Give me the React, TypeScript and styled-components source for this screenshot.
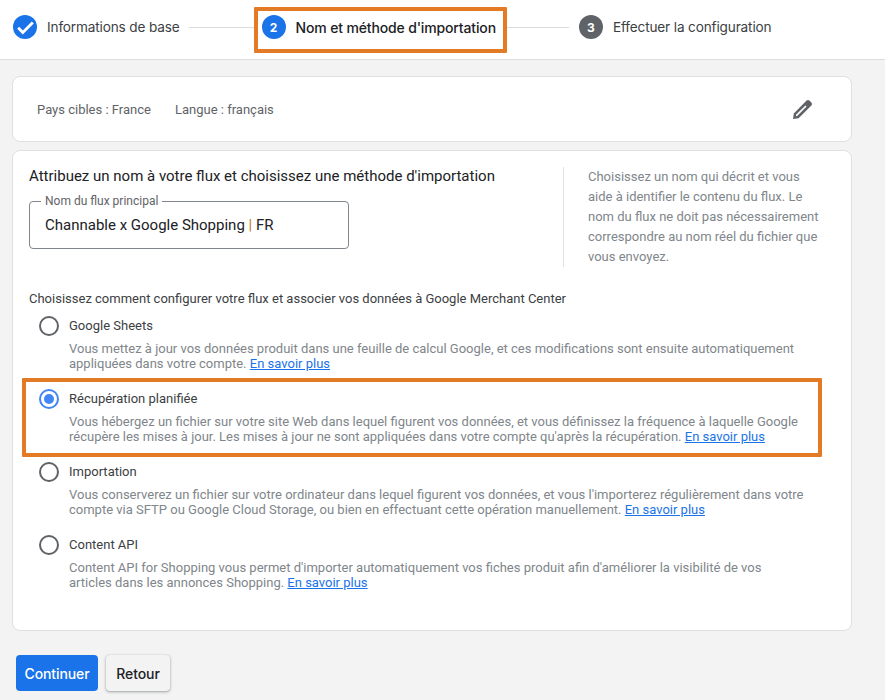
import React from "react";
import styled, { createGlobalStyle } from "styled-components";

const Global = createGlobalStyle`
  html, body { margin: 0; padding: 0; background: #f3f3f3; }
  * { box-sizing: border-box; }
  body { font-family: Roboto, "Liberation Sans", sans-serif; color: #202124; width: 885px; height: 700px; overflow: hidden; }
`;

const Stepper = styled.header`
  height: 60px;
  background: #fff;
  border-bottom: 1px solid #dadce0;
  display: flex;
  align-items: flex-start;
  padding: 7px 0 0 13px;
`;
const Step = styled.div<{ $boxed?: boolean }>`
  display: flex;
  align-items: center;
  gap: 10px;
  height: 46px;
  flex: none;
  padding-bottom: 6px;
  ${p => p.$boxed ? "border: 4px solid #e37a26; padding: 0 7px 6px 4px; border-radius: 1px;" : ""}
`;
const StepNumber = styled.span<{ $active?: boolean }>`
  width: 24px;
  height: 24px;
  border-radius: 50%;
  background: ${p => (p.$active ? "#1a73e8" : "#5f6368")};
  color: #fff;
  font: 700 12px Inter, Roboto, sans-serif;
  display: flex;
  align-items: center;
  justify-content: center;
`;
const StepLabel = styled.span<{ $strong?: boolean }>`
  font-family: Inter, Roboto, sans-serif;
  font-size: ${p => (p.$strong ? 14 : 13.6)}px;
  letter-spacing: -0.15px;
  font-weight: ${p => (p.$strong ? 500 : 400)};
  color: ${p => (p.$strong ? "#202124" : "#3c4043")};
  white-space: nowrap;
`;
const Connector = styled.span<{ $w: number; $before: number; $after: number }>`
  height: 1px;
  margin: 20px ${p => p.$after}px 0 ${p => p.$before}px;
  background: #dadce0;
  width: ${p => p.$w}px;
  flex: none;
`;
const Main = styled.main`
  padding: 16px 33px 0 12px;
`;
const Card = styled.section`
  background: #fff;
  border: 1px solid #e0e0e0;
  border-radius: 8px;
`;
const TargetCard = styled(Card)`
  height: 66px;
  display: flex;
  align-items: center;
  padding: 0 37px 0 24px;
  gap: 24px;
  font-size: 13px;
  color: #5f6368;
`;
const EditIcon = styled.svg`
  margin-left: auto;
  width: 24px;
  height: 24px;
  fill: #5f6368;
`;
const FlowCard = styled(Card)`
  margin-top: 8px;
  height: 481px;
  padding: 15px 16px 0;
`;
const TopRow = styled.div`
  display: flex;
  justify-content: space-between;
  height: 101px;
`;
const Title = styled.h2`
  margin: 0;
  font-size: 15px;
  line-height: 20px;
  font-weight: 400;
  color: #202124;
`;
const NameField = styled.fieldset`
  margin: 8px 0 0;
  padding: 0 15px;
  width: 320px;
  height: 55px;
  border: 1px solid #80868b;
  border-radius: 4px;
  font-size: 15px;
  color: #202124;
  line-height: 20px;
`;
const FieldLegend = styled.legend`
  padding: 0 4px;
  margin-left: -4px;
  font-size: 12px;
  line-height: 14px;
  color: #5f6368;
`;
const FieldValue = styled.div`
  padding-top: 7px;
`;
const Pipe = styled.span`
  color: #b8741a;
`;
const Help = styled.p`
  width: 258px;
  margin: 1px 14px 0 0;
  height: 100px;
  padding-left: 24px;
  border-left: 1px solid #e0e0e0;
  font-size: 13px;
  line-height: 20px;
  color: #80868b;
`;
const Prompt = styled.p`
  margin: 23px 0 0;
  font-size: 13px;
  line-height: 18px;
  color: #3c4043;
`;
const Options = styled.div`
  margin: -3px 0 0 -7px;
  width: 800px;
`;
const Option = styled.div<{ $hi?: boolean }>`
  height: 79px;
  margin-bottom: -6px;
  border: 4px solid ${p => (p.$hi ? "#e37a26" : "transparent")};
  border-radius: 1px;
  padding: 7px 12px 0 13px;
  display: flex;
  gap: 10px;
`;
const Radio = styled.span<{ $on?: boolean }>`
  width: 20px;
  height: 20px;
  flex: none;
  border-radius: 50%;
  border: 2px solid ${p => (p.$on ? "#4285f4" : "#5f6368")};
  display: flex;
  align-items: center;
  justify-content: center;
  &::after {
    content: "";
    width: 10px;
    height: 10px;
    border-radius: 50%;
    background: ${p => (p.$on ? "#4285f4" : "transparent")};
  }
`;
const OptionBody = styled.div`
  min-width: 0;
  padding-top: 1px;
`;
const OptionTitle = styled.div`
  font-size: 13px;
  line-height: 18px;
  color: #3c4043;
`;
const OptionText = styled.p`
  margin: 6px 0 0;
  font-size: 13px;
  line-height: 15px;
  color: #80868b;
  white-space: nowrap;
`;
const More = styled.a`
  color: #1a73e8;
  text-decoration: underline;
`;
const Actions = styled.div`
  display: flex;
  gap: 8px;
  margin: 24px 0 0 4px;
`;
const Primary = styled.button`
  height: 36px;
  width: 82px;
  border: 0;
  border-radius: 4px;
  background: #1a73e8;
  color: #fff;
  font: 500 14px Inter, Roboto, sans-serif;
  letter-spacing: -0.1px;
  padding: 0;
`;
const Secondary = styled.button`
  height: 36px;
  width: 64px;
  border: 0;
  border-radius: 4px;
  background: #f3f3f3;
  color: #202124;
  font: 500 14px Inter, Roboto, sans-serif;
  letter-spacing: -0.1px;
  padding: 0;
  box-shadow: 0 1px 3px rgba(60, 64, 67, 0.45), 0 0 1px rgba(60, 64, 67, 0.2);
`;

const items = [
  { t: "Google Sheets", l1: "Vous mettez à jour vos données produit dans une feuille de calcul Google, et ces modifications sont ensuite automatiquement", l2: "appliquées dans votre compte. " },
  { t: "Récupération planifiée", on: true, l1: "Vous hébergez un fichier sur votre site Web dans lequel figurent vos données, et vous définissez la fréquence à laquelle Google", l2: "récupère les mises à jour. Les mises à jour ne sont appliquées dans votre compte qu'après la récupération. " },
  { t: "Importation", l1: "Vous conserverez un fichier sur votre ordinateur dans lequel figurent vos données, et vous l'importerez régulièrement dans votre", l2: "compte via SFTP ou Google Cloud Storage, ou bien en effectuant cette opération manuellement. " },
  { t: "Content API", l1: "Content API for Shopping vous permet d'importer automatiquement vos fiches produit afin d'améliorer la visibilité de vos", l2: "articles dans les annonces Shopping. " },
];

export default function App() {
  return (
    <>
      <Global />
      <Stepper>
        <Step>
          <StepNumber $active>
            <svg width="24" height="24" viewBox="0 0 24 24" fill="none" stroke="#fff" strokeWidth="2.8">
              <path d="M5.2 12.8l4.6 4.6L19.8 7.4" />
            </svg>
          </StepNumber>
          <StepLabel>Informations de base</StepLabel>
        </Step>
        <Connector $w={65} $before={9} $after={0} />
        <Step $boxed>
          <StepNumber $active>2</StepNumber>
          <StepLabel $strong>Nom et méthode d'importation</StepLabel>
        </Step>
        <Connector $w={62} $before={0} $after={10} />
        <Step>
          <StepNumber>3</StepNumber>
          <StepLabel>Effectuer la configuration</StepLabel>
        </Step>
      </Stepper>
      <Main>
        <TargetCard>
          <span>Pays cibles : France</span>
          <span>Langue : français</span>
          <EditIcon viewBox="0 0 24 24">
            <path fillRule="evenodd" d="M16.6 3.6a2 2 0 0 1 2.8 0l2 2a2 2 0 0 1 0 2.8L8.6 21.2 3 22l.8-5.6L16.6 3.6zM15.4 8.4l-9.2 9.2-.4 1.6 1.6-.4 9.2-9.2-1.2-1.2z" />
          </EditIcon>
        </TargetCard>
        <FlowCard>
          <TopRow>
            <div>
              <Title>Attribuez un nom à votre flux et choisissez une méthode d'importation</Title>
              <NameField>
                <FieldLegend>Nom du flux principal</FieldLegend>
                <FieldValue>Channable x Google Shopping <Pipe>|</Pipe> FR</FieldValue>
              </NameField>
            </div>
            <Help>Choisissez un nom qui décrit et vous aide à identifier le contenu du flux. Le nom du flux ne doit pas nécessairement correspondre au nom réel du fichier que vous envoyez.</Help>
          </TopRow>
          <Prompt>Choisissez comment configurer votre flux et associer vos données à Google Merchant Center</Prompt>
          <Options>
            {items.map(i => (
              <Option key={i.t} $hi={i.on}>
                <Radio $on={i.on} />
                <OptionBody>
                  <OptionTitle>{i.t}</OptionTitle>
                  <OptionText>{i.l1}<br />{i.l2}<More href="#">En savoir plus</More></OptionText>
                </OptionBody>
              </Option>
            ))}
          </Options>
        </FlowCard>
        <Actions>
          <Primary>Continuer</Primary>
          <Secondary>Retour</Secondary>
        </Actions>
      </Main>
    </>
  );
}
